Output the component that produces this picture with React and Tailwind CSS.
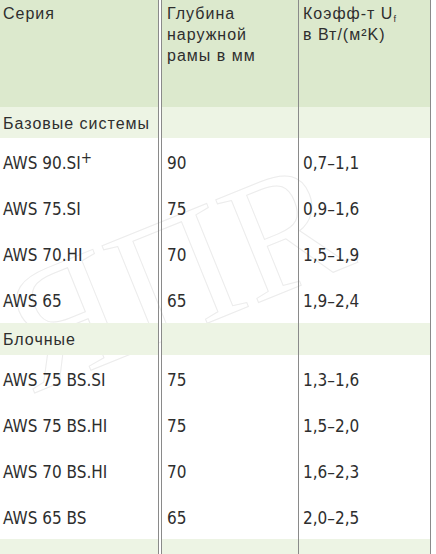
import React from "react";

const narrow = {
  fontFamily: '"DejaVu Sans Condensed", "Liberation Sans", Arial, sans-serif',
  fontStretch: "condensed",
};

function Row({ a, b, c, sup, h = "h-[46px]" }) {
  const cls = "pt-[15px] text-[17px] tracking-normal";
  return (
    <div className={`flex ${h}`}>
      <div className={`w-[159px] border-r border-[#8a8a8a] pl-[3px] ${cls}`} style={narrow}>
        {a}
        {sup && <span className="relative -top-[6px] text-[15px]">+</span>}
      </div>
      <div className="w-[2px]" />
      <div className={`w-[138px] border-x border-[#8a8a8a] pl-[5px] ${cls}`} style={narrow}>{b}</div>
      <div className={`w-[132px] border-r border-[#8a8a8a] pl-[4px] ${cls}`} style={narrow}>{c}</div>
    </div>
  );
}

function Section({ title, h = "h-[31px]" }) {
  return (
    <div className={`flex ${h}`}>
      <div className="w-[159px] border-r border-[#8a8a8a] bg-[#edf4e4] pl-[3px] pt-[6px] whitespace-nowrap">{title}</div>
      <div className="w-[2px]" />
      <div className="w-[138px] border-x border-[#8a8a8a] bg-[#edf4e4]" />
      <div className="w-[132px] border-r border-[#8a8a8a] bg-[#edf4e4]" />
    </div>
  );
}

export default function App() {
  return (
    <div
      className="relative w-[436px] h-[554px] overflow-hidden bg-white text-[16px] leading-[21px] tracking-[1px] text-[#2e2e2e]"
      style={{ fontFamily: '"Liberation Sans", Arial, sans-serif' }}
    >
      <div
        className="pointer-events-none absolute left-[0px] top-[190px] text-[170px] leading-none -rotate-[22deg] text-transparent select-none tracking-normal"
        style={{ fontFamily: '"Liberation Serif", serif', WebkitTextStroke: "1px #ececec" }}
      >
        ЯПR
      </div>
      <div className="relative">
        <div className="flex h-[107px]">
          <div className="w-[159px] border-r border-[#8a8a8a] bg-[#dce9cd] pl-[3px] pt-[3px]">Серия</div>
          <div className="w-[2px]" />
          <div className="w-[138px] border-x border-[#8a8a8a] bg-[#dce9cd] pl-[5px] pt-[3px]">
            Глубина<br />наружной<br />рамы в мм
          </div>
          <div className="w-[132px] border-r border-[#8a8a8a] bg-[#dce9cd] pl-[4px] pt-[3px]">
            Коэфф-т U<sub className="text-[9px] align-baseline relative top-[3px]">f</sub>
            <br />в Вт/(м²K)
          </div>
        </div>
        <Section title="Базовые системы" />
        <Row a="AWS 90.SI" sup b="90" c="0,7–1,1" />
        <Row a="AWS 75.SI" b="75" c="0,9–1,6" />
        <Row a="AWS 70.HI" b="70" c="1,5–1,9" />
        <Row a="AWS 65" b="65" c="1,9–2,4" h="h-[47px]" />
        <Section title="Блочные" h="h-[32px]" />
        <Row a="AWS 75 BS.SI" b="75" c="1,3–1,6" />
        <Row a="AWS 75 BS.HI" b="75" c="1,5–2,0" />
        <Row a="AWS 70 BS.HI" b="70" c="1,6–2,3" />
        <Row a="AWS 65 BS" b="65" c="2,0–2,5" />
        <Section title="" h="h-[20px]" />
      </div>
    </div>
  );
}
